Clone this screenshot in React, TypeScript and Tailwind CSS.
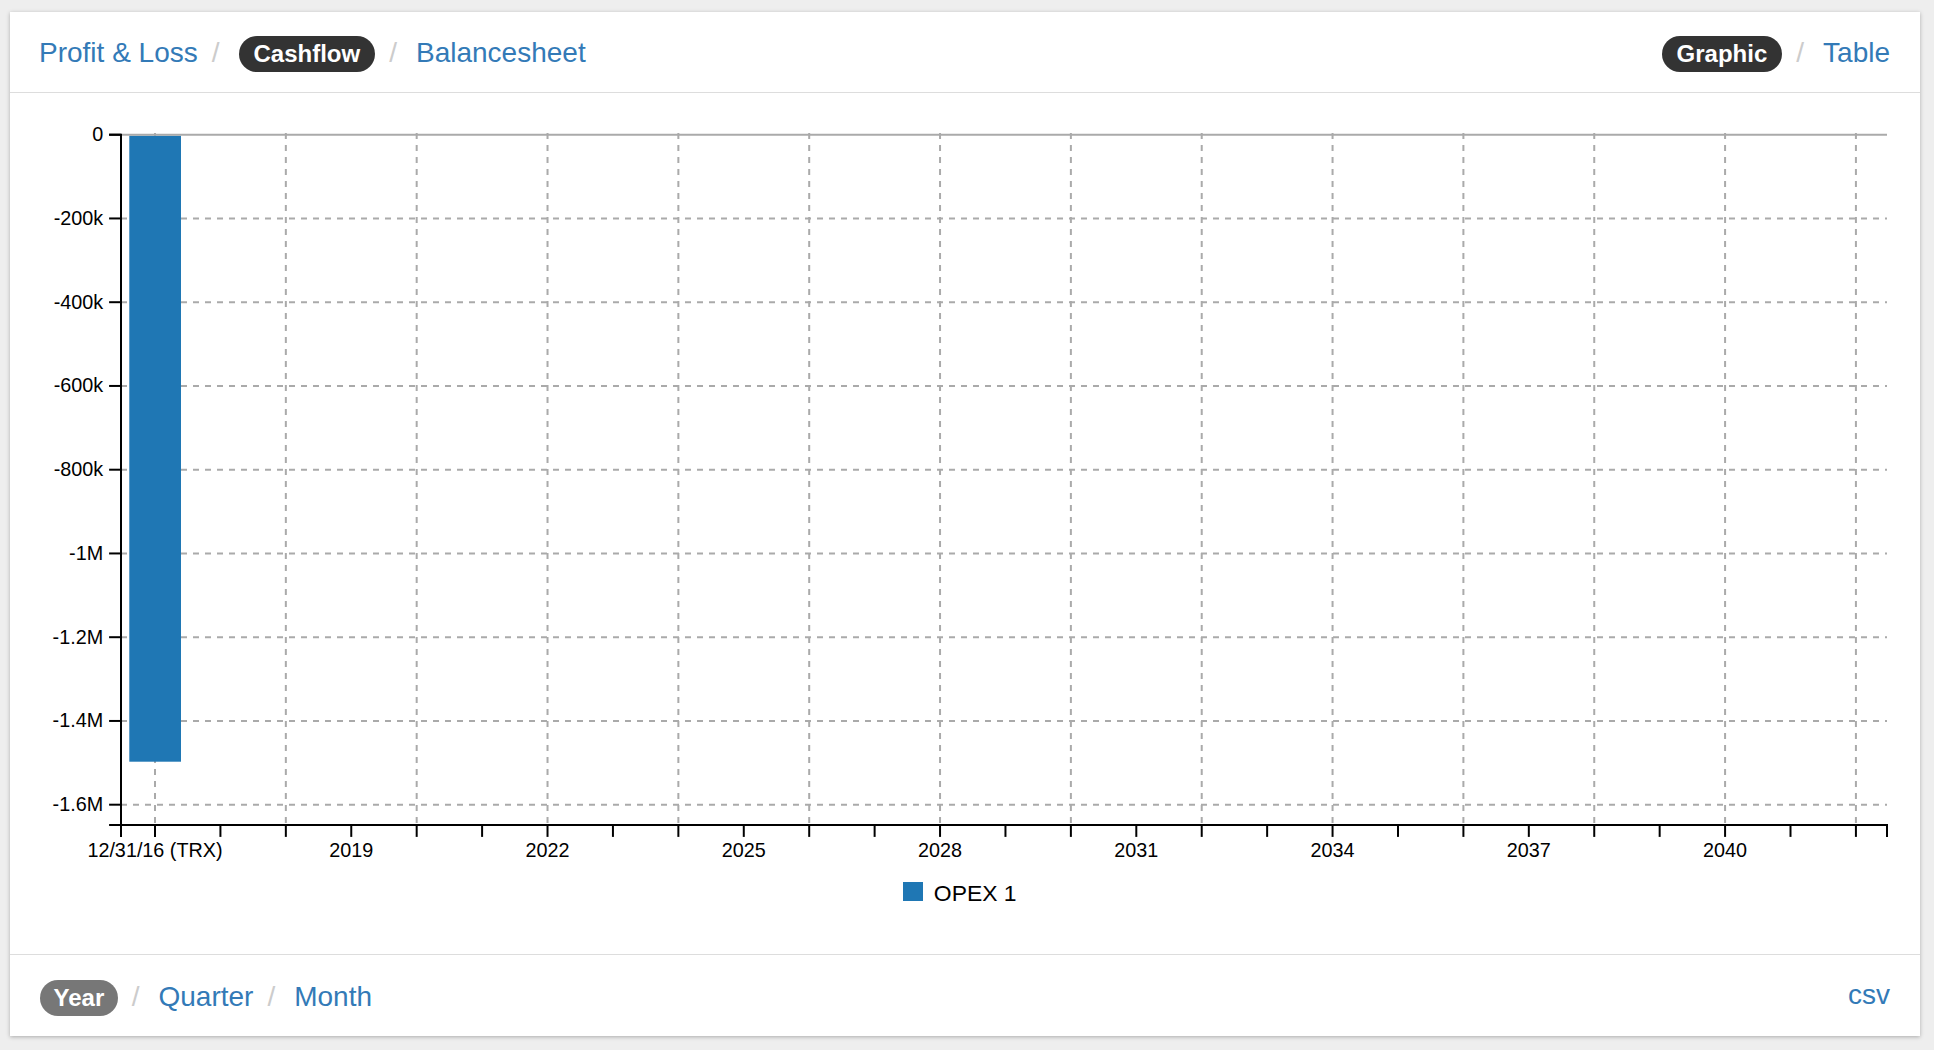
import React from "react";

const Y0 = 134.7;
const YS = 83.75;
const X0 = 155;
const XS = 65.42;
const AX_L = 121;
const AX_R = 1887;
const AX_B = 825;
const TICK = 11.9;

const yLabels = ["0", "-200k", "-400k", "-600k", "-800k", "-1M", "-1.2M", "-1.4M", "-1.6M"];

function Sep() {
  return <span className="pl-[14px] pr-[19px] leading-[30px] text-[#cccccc]">/</span>;
}

function Pill({ children, dark = true }: { children: React.ReactNode; dark?: boolean }) {
  return (
    <span
      className={
        "inline-block h-[36px] leading-[36px] rounded-full text-white font-bold text-[24px] " +
        (dark ? "px-[15px] bg-[#333333]" : "px-[13.5px] bg-[#777777]")
      }
    >
      {children}
    </span>
  );
}

function Link({ children }: { children: React.ReactNode }) {
  return <span className="text-[#337ab7] leading-[30px]">{children}</span>;
}

function Chart() {
  const vGrid = Array.from({ length: 14 }, (_, k) => X0 + 2 * XS * k);
  const xTicks = Array.from({ length: 27 }, (_, j) => X0 + XS * j);
  const xLabels = Array.from({ length: 9 }, (_, i) => ({
    x: X0 + XS * 3 * i,
    t: i === 0 ? "12/31/16 (TRX)" : String(2016 + 3 * i),
  }));
  return (
    <svg width="1910" height="787" viewBox="10 93 1910 787" className="block shrink-0">
      {vGrid.map((x, i) => (
        <line key={"vg" + i} x1={x} x2={x} y1={133} y2={AX_B} stroke="#aaaaaa" strokeWidth={2} strokeDasharray="6 6" />
      ))}
      {yLabels.map((_, i) =>
        i === 0 ? null : (
          <line
            key={"hg" + i}
            x1={AX_L}
            x2={AX_R}
            y1={Y0 + YS * i}
            y2={Y0 + YS * i}
            stroke="#aaaaaa"
            strokeWidth={2}
            strokeDasharray="6 6"
          />
        )
      )}
      <rect x={129.3} y={135.7} width={51.7} height={761.7 - 135.7} fill="#1f77b4" />
      <line x1={AX_L} x2={AX_R} y1={Y0} y2={Y0} stroke="#aaaaaa" strokeWidth={2} />
      <path d={`M${AX_L - TICK},${Y0}H${AX_L}V${AX_B}H${AX_L - TICK}`} fill="none" stroke="#000" strokeWidth={2} />
      {yLabels.map((t, i) => (
        <g key={"yt" + i}>
          <line x1={AX_L - TICK} x2={AX_L} y1={Y0 + YS * i} y2={Y0 + YS * i} stroke="#000" strokeWidth={2} />
          <text x={103.2} y={Y0 + YS * i + 6.3} textAnchor="end" fontSize={19.8} fill="#000">
            {t}
          </text>
        </g>
      ))}
      <path d={`M${AX_L},${AX_B + TICK}V${AX_B}H${AX_R}V${AX_B + TICK}`} fill="none" stroke="#000" strokeWidth={2} />
      {xTicks.map((x, j) => (
        <line key={"xt" + j} x1={x} x2={x} y1={AX_B} y2={AX_B + TICK} stroke="#000" strokeWidth={2} />
      ))}
      {xLabels.map((l, i) => (
        <text key={"xl" + i} x={l.x} y={856.9} textAnchor="middle" fontSize={19.8} fill="#000">
          {l.t}
        </text>
      ))}
    </svg>
  );
}

export default function App() {
  return (
    <div className="h-[1050px] bg-[#eeeeee] pt-[12px] pl-[10px] pr-[14px] font-['Liberation_Sans',Arial,sans-serif]">
      <div className="h-[1024px] bg-white shadow-[0_1px_4px_rgba(0,0,0,0.28)] flex flex-col">
        <div className="h-[81px] shrink-0 border-b border-[#dddddd] pt-[24px] pl-[29px] pr-[30px] flex items-start justify-between text-[28px]">
          <div className="flex items-baseline">
            <Link>Profit &amp; Loss</Link>
            <Sep />
            <Pill>Cashflow</Pill>
            <Sep />
            <Link>Balancesheet</Link>
          </div>
          <div className="flex items-baseline">
            <Pill>Graphic</Pill>
            <Sep />
            <Link>Table</Link>
          </div>
        </div>
        <div className="flex-1 flex flex-col">
          <Chart />
          <div className="flex justify-center pr-[10px]">
            <div className="flex items-start">
              <span className="mt-[1.6px] w-[19.4px] h-[19.4px] bg-[#1f77b4]" />
              <span className="ml-[11px] text-[22.9px] leading-[26px] text-black">OPEX 1</span>
            </div>
          </div>
        </div>
        <div className="h-[82px] shrink-0 border-t border-[#dddddd] pt-[25px] pl-[30px] pr-[30px] flex items-start justify-between text-[28px]">
          <div className="flex items-baseline">
            <Pill dark={false}>Year</Pill>
            <Sep />
            <Link>Quarter</Link>
            <Sep />
            <Link>Month</Link>
          </div>
          <div className="flex items-baseline">
            <Link>csv</Link>
          </div>
        </div>
      </div>
    </div>
  );
}
